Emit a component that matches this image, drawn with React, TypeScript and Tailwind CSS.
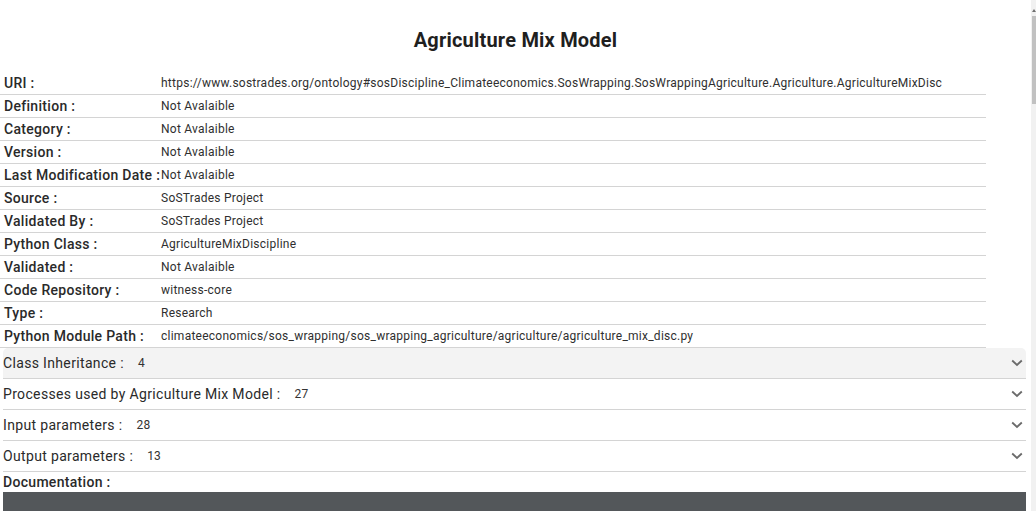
import React from "react";

const rows: [string, string][] = [
  ["URI :", "https://www.sostrades.org/ontology#sosDiscipline_Climateeconomics.SosWrapping.SosWrappingAgriculture.Agriculture.AgricultureMixDisc"],
  ["Definition :", "Not Avalaible"],
  ["Category :", "Not Avalaible"],
  ["Version :", "Not Avalaible"],
  ["Last Modification Date :", "Not Avalaible"],
  ["Source :", "SoSTrades Project"],
  ["Validated By :", "SoSTrades Project"],
  ["Python Class :", "AgricultureMixDiscipline"],
  ["Validated :", "Not Avalaible"],
  ["Code Repository :", "witness-core"],
  ["Type :", "Research"],
  ["Python Module Path :", "climateeconomics/sos_wrapping/sos_wrapping_agriculture/agriculture/agriculture_mix_disc.py"],
];

const sections: [string, string, boolean][] = [
  ["Class Inheritance :", "4", true],
  ["Processes used by Agriculture Mix Model :", "27", false],
  ["Input parameters :", "28", false],
  ["Output parameters :", "13", false],
];

function Chevron() {
  return (
    <svg width="12" height="8" viewBox="0 0 12 8" fill="none">
      <path d="M1.2 1.5 L6 6 L10.8 1.5" stroke="#6b6b6b" strokeWidth="1.8" />
    </svg>
  );
}

export default function App() {
  return (
    <div
      className="flex h-[511px] w-[1036px] overflow-hidden bg-white text-[#212121]"
      style={{ fontFamily: "Roboto, 'Liberation Sans', sans-serif" }}
    >
      <div className="flex flex-1 flex-col">
        <h1 className="mt-[28px] mb-[20px] text-center text-[20px] font-bold leading-[24px] tracking-[0.2px] text-[#1f1f1f]">
          Agriculture Mix Model
        </h1>
        <div className="w-[986px]">
          {rows.map(([k, v]) => (
            <div key={k} className="flex h-[23px] items-center border-b border-[#d4d4d4] pl-[4px]">
              <div className="w-[157px] shrink-0 whitespace-nowrap text-[14px] font-medium tracking-[0.3px] text-[#2a2a2a]">{k}</div>
              <div className="whitespace-nowrap text-[12px] tracking-[0.25px] text-[#2f2f2f]">{v}</div>
            </div>
          ))}
        </div>
        <div className="ml-[3px] mr-[5px]">
          {sections.map(([k, n, active]) => (
            <div
              key={k}
              className={`flex h-[31px] items-center border-b border-[#d4d4d4] ${active ? "rounded-t-[5px] bg-[#f3f3f3]" : ""}`}
            >
              <span className="text-[14px] tracking-[0.34px] text-[#2a2a2a]">{k}</span>
              <span className="ml-[14px] text-[12px] tracking-[0.25px] text-[#333]">{n}</span>
              <div className="ml-auto flex w-[18px] justify-center">
                <Chevron />
              </div>
            </div>
          ))}
          <div className="flex h-[20px] items-center text-[14px] font-medium tracking-[0.3px] text-[#2a2a2a]">Documentation :</div>
          <div className="h-[20px] bg-[#53575a]" />
        </div>
      </div>
      <div className="relative w-[5px] bg-[#f1f1f1]">
        <div className="absolute left-[1px] top-[9px] h-0 w-0 border-x-[2px] border-b-[3px] border-x-transparent border-b-[#6f6f6f]" />
        <div className="absolute left-[1px] right-0 top-[16px] h-[88px] bg-[#c1c1c1]" />
      </div>
    </div>
  );
}
